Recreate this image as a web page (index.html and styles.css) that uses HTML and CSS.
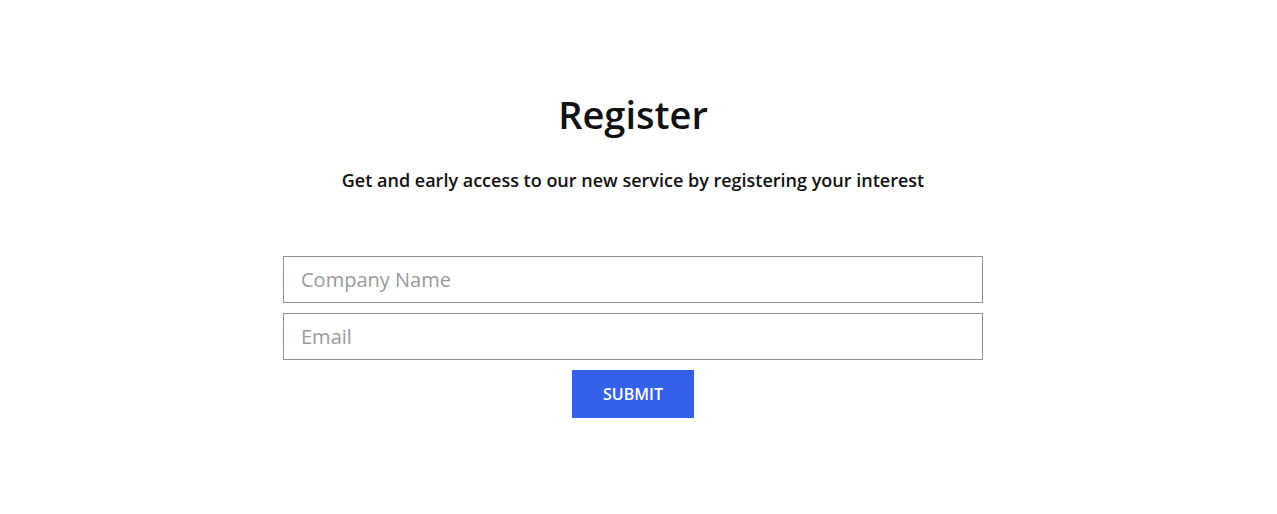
FILE: index.html
```html
<!DOCTYPE html>
<html lang="en">
<head>
<meta charset="utf-8">
<title>Register</title>
<link rel="stylesheet" href="styles.css">
</head>
<body>
<main class="register">
  <h1 class="register__title">Register</h1>
  <p class="register__lead">Get and early access to our new service by registering your interest</p>
  <form class="register__form">
    <input class="register__input" type="text" placeholder="Company Name">
    <input class="register__input" type="email" placeholder="Email">
    <button class="register__submit" type="button">SUBMIT</button>
  </form>
</main>
</body>
</html>
```
FILE: styles.css
```css
html, body {
  margin: 0;
  padding: 0;
  background: #fff;
}
body {
  font-family: "Open Sans", "Liberation Sans", sans-serif;
  color: #111;
}
.register {
  display: flex;
  flex-direction: column;
  align-items: center;
  padding-top: 88px;
  padding-right: 11px;
}
.register__title {
  margin: 0;
  font-size: 38px;
  font-weight: 600;
  line-height: 52px;
}
.register__lead {
  margin: 27px 0 0;
  font-size: 18px;
  font-weight: 600;
  line-height: 26px;
}
.register__form {
  margin-top: 63px;
  width: 700px;
  display: flex;
  flex-direction: column;
  align-items: center;
  gap: 10px;
}
.register__input {
  box-sizing: border-box;
  width: 100%;
  height: 47px;
  margin: 0;
  padding: 0 17px;
  border: 1px solid #8f8f8f;
  border-radius: 0;
  font-family: inherit;
  font-size: 20px;
  color: #333;
  outline: none;
}
.register__input::placeholder {
  color: #9a9a9a;
}
.register__submit {
  box-sizing: border-box;
  width: 122px;
  height: 48px;
  border: 0;
  border-radius: 0;
  background: #3361e8;
  color: #fff;
  font-family: inherit;
  font-size: 16px;
  font-weight: 600;
  cursor: pointer;
}
```
